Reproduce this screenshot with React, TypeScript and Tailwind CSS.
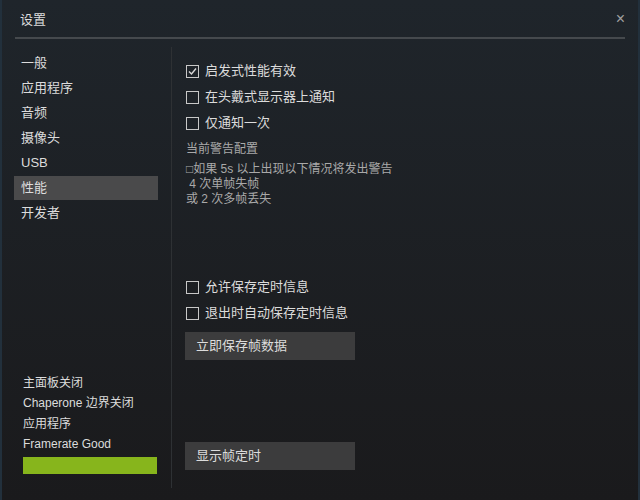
import React from "react";

const font = { fontFamily: '"Liberation Sans", "Noto Sans CJK SC", sans-serif' };

function Check({ checked, label }: { checked?: boolean; label: string }) {
  return (
    <div className="flex items-center h-[26px]">
      <div className="w-[13px] h-[13px] border border-[#c8c8c8] flex items-center justify-center">
        {checked && (
          <svg width="11" height="11" viewBox="0 0 11 11">
            <path d="M2 5.5 L4.5 8 L9 2.5" stroke="#d8d8d8" strokeWidth="1.4" fill="none" />
          </svg>
        )}
      </div>
      <span className="ml-[6px] text-[13px] text-[#dcdcdc]">{label}</span>
    </div>
  );
}

export default function App() {
  const items = ["一般", "应用程序", "音频", "摄像头", "USB", "性能", "开发者"];
  return (
    <div
      className="w-[640px] h-[500px] flex flex-col px-[13px] bg-gradient-to-b from-[#1f252b] to-[#1a1a1c] border-l-2 border-r-2 border-[#22303c] overflow-hidden"
      style={font}
    >
      <div className="h-[39px] flex items-center justify-between pl-[5px] pr-0 border-b-2 border-[#45494d] shrink-0">
        <span className="text-[13px] text-[#dcdcdc] pt-[2px]">设置</span>
        <span className="text-[16px] text-[#a0a0a0]">×</span>
      </div>
      <div className="flex flex-1 min-h-0">
        <div className="w-[144px] ml-[-1px] flex flex-col justify-between pt-[12px] pb-[26px]">
          <div className="flex flex-col gap-[1px]">
            {items.map((it) => (
              <div
                key={it}
                className={`h-[24px] flex items-center pl-[7px] text-[13px] text-[#dcdcdc] ${
                  it === "性能" ? "bg-[#4a4a4b]" : ""
                }`}
              >
                {it}
              </div>
            ))}
          </div>
          <div className="flex flex-col pl-[9px] text-[12px] text-[#dcdcdc]">
            <div className="h-[20px] flex items-center">主面板关闭</div>
            <div className="h-[20px] flex items-center">Chaperone 边界关闭</div>
            <div className="h-[21px] flex items-center">应用程序</div>
            <div className="h-[20px] flex items-center">Framerate Good</div>
            <div className="mt-[3px] w-[134px] h-[17px] bg-[#87b51c]" />
          </div>
        </div>
        <div className="ml-[13px] mt-[8px] mb-[12px] border-l border-[#2e3134] flex-1 flex flex-col pl-[14px] pt-[11px] pb-[18px]">
          <Check checked label="启发式性能有效" />
          <Check label="在头戴式显示器上通知" />
          <Check label="仅通知一次" />
          <div className="h-[26px] flex items-center text-[12px] text-[#a9a9a9]">当前警告配置</div>
          <div className="text-[12px] leading-[15px] text-[#a9a9a9]">
            <div>□如果 5s 以上出现以下情况将发出警告</div>
            <div>&nbsp;4 次单帧失帧</div>
            <div>或 2 次多帧丢失</div>
          </div>
          <div className="h-[67px]" />
          <Check label="允许保存定时信息" />
          <Check label="退出时自动保存定时信息" />
          <div className="mt-[6px] w-[170px] h-[28px] bg-[#3c3c3d] flex items-center pl-[11px] ml-[-1px] text-[13px] text-[#dcdcdc]">
            立即保存帧数据
          </div>
          <div className="flex-1" />
          <div className="w-[170px] h-[28px] bg-[#3c3c3d] flex items-center pl-[11px] ml-[-1px] text-[13px] text-[#dcdcdc]">
            显示帧定时
          </div>
        </div>
      </div>
    </div>
  );
}
